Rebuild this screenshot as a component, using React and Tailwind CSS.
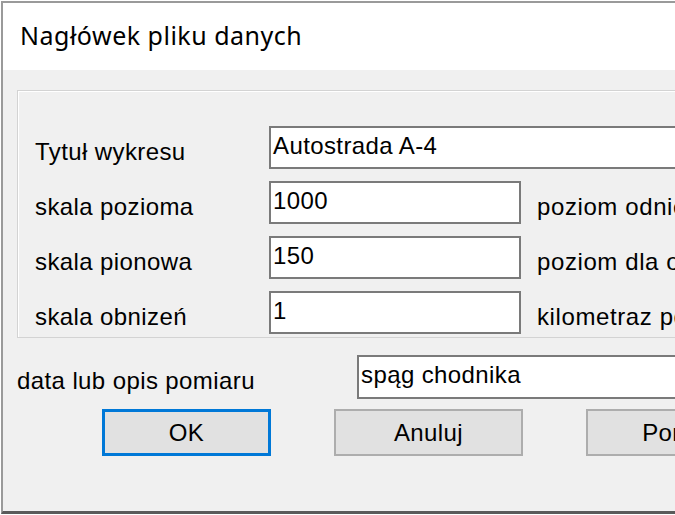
import React from 'react';

const labelFont = { fontFamily: '"Liberation Sans", Arial, sans-serif' };

function Field({ value, className = '' }) {
  return (
    <div
      className={`h-[43px] bg-white border-2 border-[#7a7a7a] pl-[2px] pt-[4px] text-[24px] tracking-[0.4px] leading-[28px] text-black whitespace-nowrap overflow-hidden ${className}`}
    >
      {value}
    </div>
  );
}

function Button({ children, focused, className = '' }) {
  return (
    <div
      className={`h-[47px] flex items-center justify-center bg-[#e1e1e1] text-[24px] tracking-[0.4px] text-black shrink-0 ${
        focused ? 'border-[3px] border-[#0078d7]' : 'border-2 border-[#adadad]'
      } ${className}`}
    >
      {children}
    </div>
  );
}

export default function App() {
  const rows = [
    { label: 'skala pozioma', value: '1000', right: 'poziom odniesienia' },
    { label: 'skala pionowa', value: '150', right: 'poziom dla osi' },
    { label: 'skala obnizeń', value: '1', right: 'kilometraz początkowy' },
  ];

  return (
    <div className="w-[675px] h-[515px] overflow-hidden bg-white pl-px pt-px" style={labelFont}>
      <div className="w-[800px] h-[513px] flex flex-col border-l-2 border-t-2 border-b-[3px] border-l-[#9a9a9a] border-t-[#9a9a9a] border-b-[#5a5a5a]">
        {/* title bar */}
        <div className="h-[67px] shrink-0 bg-white flex items-center pl-[17px] pb-[2px]">
          <span
            className="text-[25px] tracking-[0.5px] text-black"
            style={{ fontFamily: '"Noto Sans", "Open Sans", sans-serif' }}
          >
            Nagłówek pliku danych
          </span>
        </div>

        {/* client area */}
        <div className="flex-1 bg-[#f0f0f0] pt-[20px] pl-[14px]">
          <div className="w-[760px] h-[248px] border border-[#d3d3d3] shadow-[inset_1px_1px_0_#ffffff] pt-[35px] pl-[17px]">
            <div className="grid grid-cols-[234px_252px_auto] gap-y-[12px]">
              <div className="h-[43px] pt-[12px] text-[24px] tracking-[0.4px] leading-[28px] text-black">Tytuł wykresu</div>
              <Field value="Autostrada A-4" className="col-span-2" />
              {rows.map((r) => (
                <React.Fragment key={r.label}>
                  <div className="h-[43px] pt-[12px] text-[24px] tracking-[0.4px] leading-[28px] text-black">{r.label}</div>
                  <Field value={r.value} />
                  <div className="h-[43px] pt-[12px] pl-[16px] text-[24px] tracking-[0.6px] leading-[28px] text-black whitespace-nowrap">
                    {r.right}
                  </div>
                </React.Fragment>
              ))}
            </div>
          </div>

          <div className="flex mt-[17px]">
            <div className="w-[340px] shrink-0 pt-[12px] text-[24px] tracking-[0.4px] leading-[28px] text-black">
              data lub opis pomiaru
            </div>
            <Field value="spąg chodnika" className="w-[400px] h-[44px]" />
          </div>

          <div className="flex mt-[10px] pl-[85px] gap-[63px]">
            <Button focused className="w-[169px]">OK</Button>
            <Button className="w-[189px]">Anuluj</Button>
            <Button className="w-[189px]">Pomoc</Button>
          </div>
        </div>
      </div>
    </div>
  );
}
